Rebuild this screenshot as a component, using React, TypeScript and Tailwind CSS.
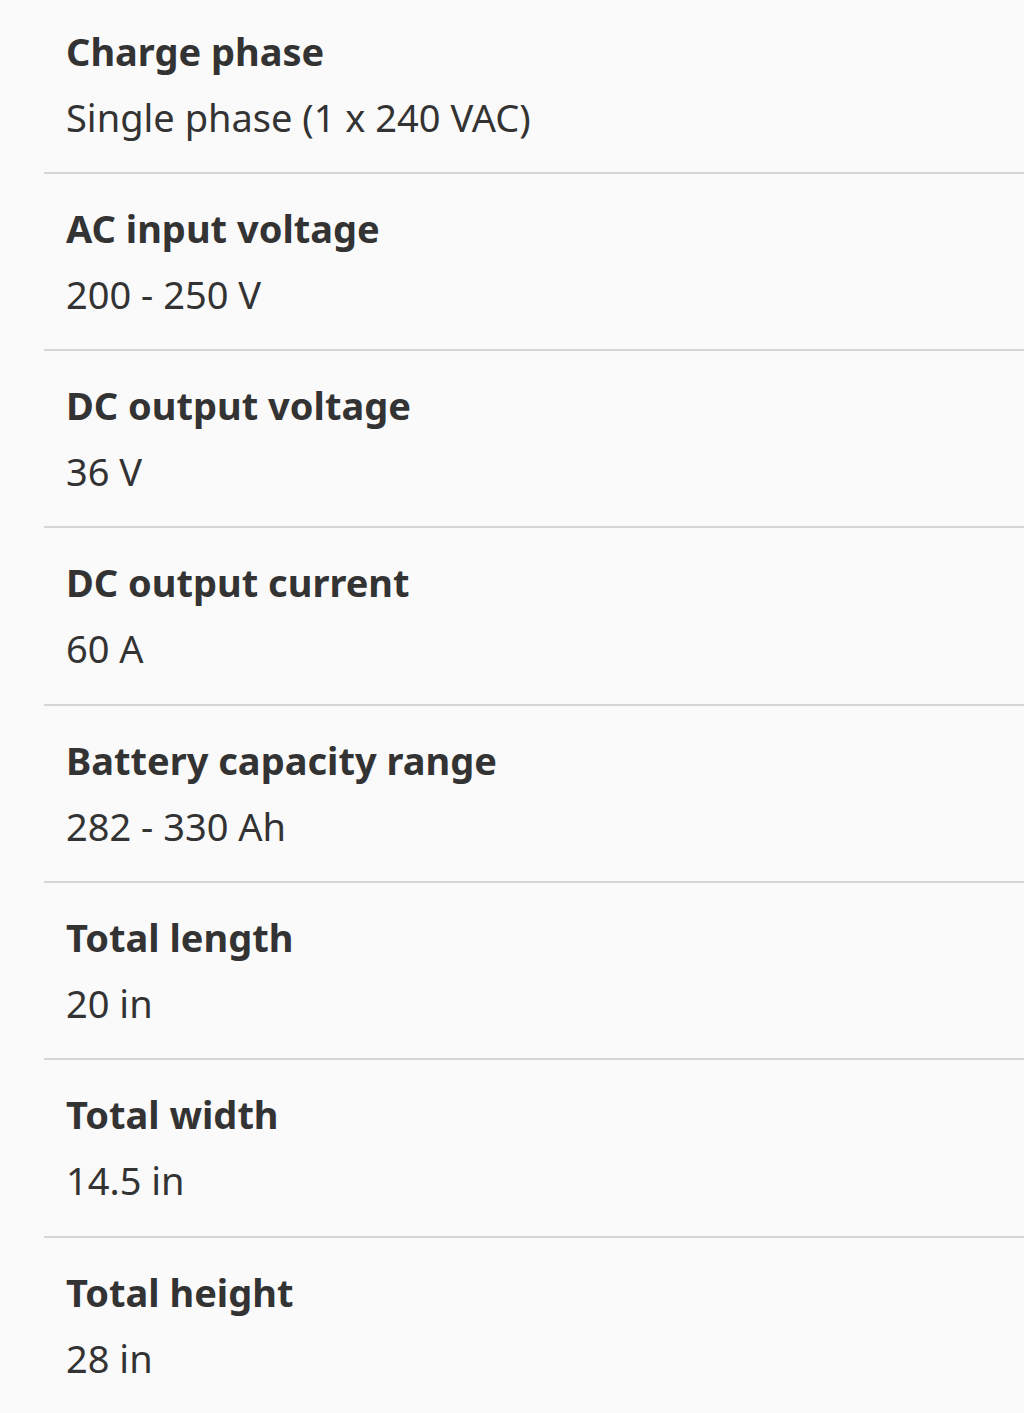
import React from 'react';

interface Spec {
  label: string;
  value: string;
}

const specs: Spec[] = [
  { label: 'Charge phase', value: 'Single phase (1 x 240 VAC)' },
  { label: 'AC input voltage', value: '200 - 250 V' },
  { label: 'DC output voltage', value: '36 V' },
  { label: 'DC output current', value: '60 A' },
  { label: 'Battery capacity range', value: '282 - 330 Ah' },
  { label: 'Total length', value: '20 in' },
  { label: 'Total width', value: '14.5 in' },
  { label: 'Total height', value: '28 in' },
];

function SpecRow({ spec, first }: { spec: Spec; first: boolean }) {
  return (
    <div className={`border-b-2 border-[#d6d6d6] last:border-b-0 pl-[22px] pb-[29.3px] ${first ? 'pt-[24.5px]' : 'pt-[28px]'}`}>
      <div className="text-[38px] leading-[52px] font-bold text-[#333333]">{spec.label}</div>
      <div className="mt-[14px] text-[38px] leading-[52px] text-[#333333]">{spec.value}</div>
    </div>
  );
}

export default function App() {
  return (
    <div
      className="min-h-screen w-full overflow-hidden bg-[#fafafa]"
      style={{ fontFamily: '"Noto Sans", "Open Sans", sans-serif' }}
    >
      <div className="ml-[44px]">
        {specs.map((s, i) => (
          <SpecRow key={s.label} spec={s} first={i === 0} />
        ))}
      </div>
    </div>
  );
}
